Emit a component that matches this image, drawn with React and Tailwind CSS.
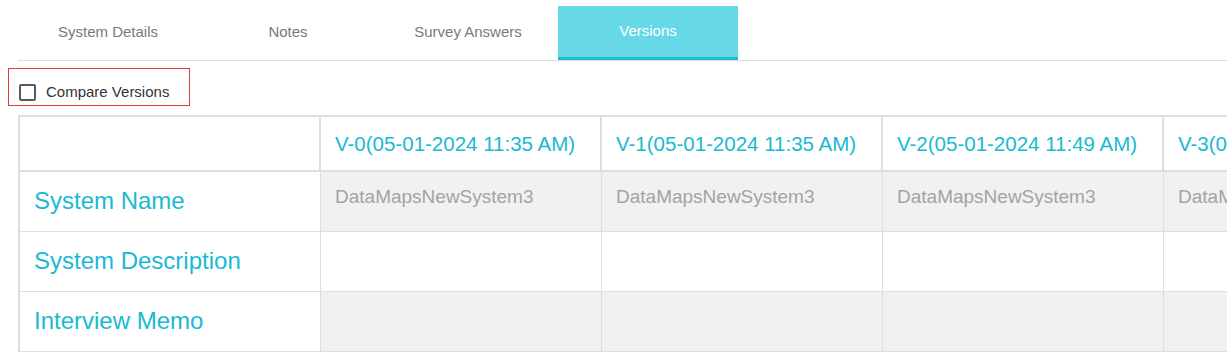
import React, { useState } from 'react';

const tabs = ['System Details', 'Notes', 'Survey Answers', 'Versions'];

const versions = [
  'V-0(05-01-2024 11:35 AM)',
  'V-1(05-01-2024 11:35 AM)',
  'V-2(05-01-2024 11:49 AM)',
  'V-3(05-01-2024 11:49 AM)',
];

const rows = [
  { label: 'System Name', value: 'DataMapsNewSystem3', shaded: true },
  { label: 'System Description', value: '', shaded: false },
  { label: 'Interview Memo', value: '', shaded: true },
];

export default function App() {
  const [active, setActive] = useState('Versions');
  const [compare, setCompare] = useState(false);

  return (
    <div className="w-[1227px] h-[355px] overflow-hidden bg-white font-['Liberation_Sans',Arial,sans-serif]">
      {/* tabs */}
      <div className="ml-[18px] pt-[6px] flex border-b border-[#dddddd]">
        {tabs.map(t => (
          <button
            key={t}
            onClick={() => setActive(t)}
            className={
              t === active
                ? 'w-[180px] h-[54px] pb-[1px] text-[15px] text-white bg-[#67d8e6] border-b-[3px] border-[#19bcd3]'
                : 'w-[180px] h-[54px] pt-[2px] text-[15px] text-[#7a7a7a] border-b-[3px] border-transparent'
            }
          >
            {t}
          </button>
        ))}
      </div>

      {/* compare toggle */}
      <div className="ml-[8px] mt-[7px] w-[182px] h-[38px] border border-[#e23b3b] flex items-center pt-[11px] pl-[10px] gap-[10px]">
        <button
          onClick={() => setCompare(!compare)}
          className="w-[17px] h-[17px] border-2 border-[#5a5a5a] rounded-[2px] bg-white"
        />
        <span className="text-[15px] text-[#333]">Compare Versions</span>
      </div>

      {/* versions table */}
      <div className="ml-[18px] mt-[9px] w-[1444px] border-l-2 border-t-2 border-[#dcdee2]">
        <div className="flex h-[55px] border-b-2 border-[#dcdee2]">
          <div className="w-[301px] shrink-0 border-r-2 border-[#dcdee2]" />
          {versions.map(v => (
            <div key={v} className="w-[281px] shrink-0 border-r-2 border-[#dcdee2] pl-[14px] pt-[2px] flex items-center text-[20.5px] text-[#1ab9d3]">
              {v}
            </div>
          ))}
        </div>
        {rows.map(r => (
          <div key={r.label} className="flex h-[60px] border-b border-[#dcdee2]">
            <div className="w-[301px] shrink-0 border-r border-[#dcdee2] pl-[14px] pb-[2px] flex items-center text-[24px] text-[#1ab9d3]">
              {r.label}
            </div>
            {versions.map(v => (
              <div
                key={v}
                className={
                  r.shaded
                    ? 'w-[281px] shrink-0 border-r border-[#dcdee2] pl-[14px] pt-[11px] text-[19px] text-[#a3a3a3] bg-[#f1f1f1]'
                    : 'w-[281px] shrink-0 border-r border-[#dcdee2] pl-[14px] pt-[11px] text-[19px] text-[#a3a3a3] bg-white'
                }
              >
                {r.value}
              </div>
            ))}
          </div>
        ))}
      </div>
    </div>
  );
}
